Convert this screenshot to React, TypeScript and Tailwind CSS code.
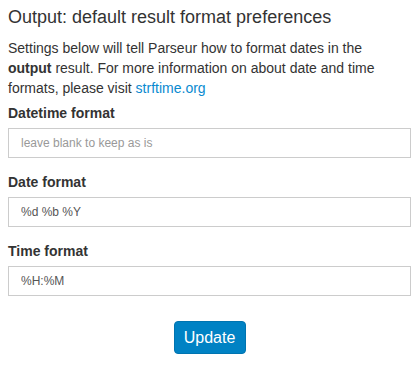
import React from "react";

const Field: React.FC<{ label: string; value?: string; placeholder?: string }> = ({ label, value, placeholder }) => (
  <div className="mb-[14px]">
    <label className="block text-[14px] font-bold leading-[20px] text-[#333] mb-[5px]">{label}</label>
    <input
      type="text"
      defaultValue={value}
      placeholder={placeholder}
      className="block w-full h-[30px] px-[12px] border border-[#ccc] bg-white text-[12px] text-[#555] placeholder:text-[#999] outline-none"
    />
  </div>
);

export default function App() {
  return (
    <div className="w-[419px] h-[376px] bg-white px-[8px] pt-[4px] text-[#333]" style={{ fontFamily: '"Liberation Sans", Arial, sans-serif' }}>
      <h3 className="text-[18px] leading-[26px] font-normal text-[#333] mb-[8px]">Output: default result format preferences</h3>
      <p className="text-[14px] leading-[20px] mb-[5px] pr-[30px]">
        Settings below will tell Parseur how to format dates in the <b>output</b> result. For more information on about date and time formats, please visit{" "}
        <a href="#" className="text-[#0a8ad0]">strftime.org</a>
      </p>
      <Field label="Datetime format" placeholder="leave blank to keep as is" />
      <Field label="Date format" value="%d %b %Y" />
      <Field label="Time format" value="%H:%M" />
      <div className="flex justify-center pt-[11px]">
        <button className="w-[72px] h-[33px] rounded-[4px] bg-[#0082c4] text-white text-[16px] border border-[#0074b0]">Update</button>
      </div>
    </div>
  );
}
